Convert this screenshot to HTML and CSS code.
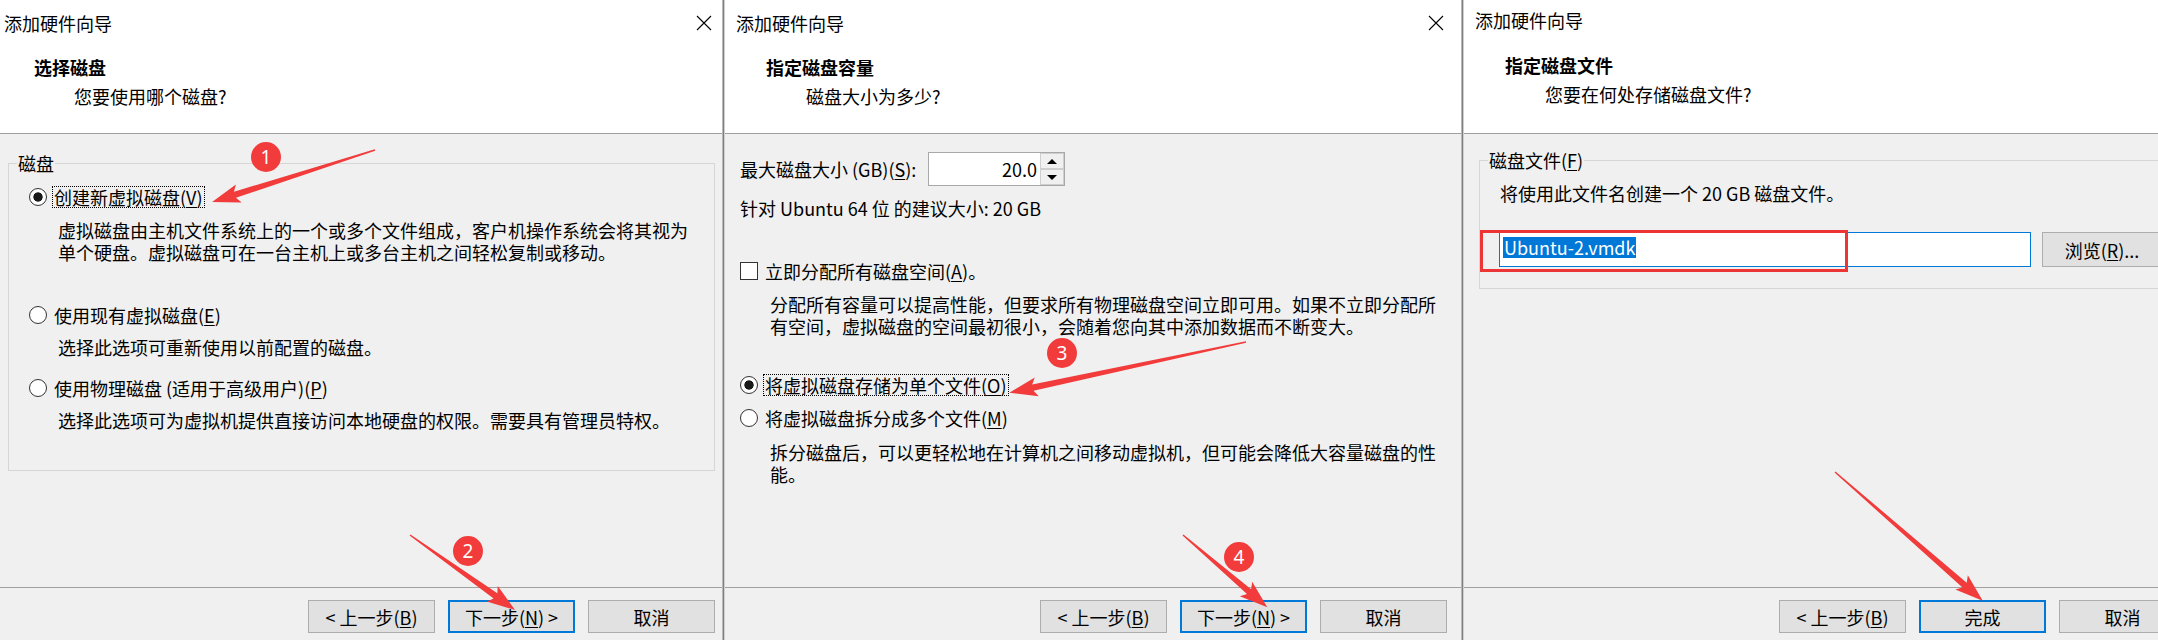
FILE: index.html
```html
<!DOCTYPE html>
<html lang="zh-CN">
<head>
<meta charset="utf-8">
<title>添加硬件向导</title>
<link rel="stylesheet" href="styles.css">
</head>
<body>
<div class="shot">
  <div class="crop crop-1">
    <div class="win win-1">
      <div class="head">
        <div class="titlebar"><span>添加硬件向导</span><svg class="close" viewBox="0 0 16 16"><path d="M1 1L15 15M15 1L1 15" stroke="#000" stroke-width="1.1" fill="none"/></svg></div>
        <div class="heading">选择磁盘</div>
        <div class="sub">您要使用哪个磁盘?</div>
      </div>
      <div class="main main-disk">
        <fieldset class="group">
          <legend>磁盘</legend>
          <div class="opt opt-a"><span class="radio on"></span><span class="lbl focus">创建新虚拟磁盘(<u>V</u>)</span></div>
          <p class="desc desc-a">虚拟磁盘由主机文件系统上的一个或多个文件组成，客户机操作系统会将其视为<br>单个硬盘。虚拟磁盘可在一台主机上或多台主机之间轻松复制或移动。</p>
          <div class="opt opt-b"><span class="radio"></span><span class="lbl">使用现有虚拟磁盘(<u>E</u>)</span></div>
          <p class="desc desc-b">选择此选项可重新使用以前配置的磁盘。</p>
          <div class="opt opt-c"><span class="radio"></span><span class="lbl">使用物理磁盘 (适用于高级用户)(<u>P</u>)</span></div>
          <p class="desc desc-b">选择此选项可为虚拟机提供直接访问本地硬盘的权限。需要具有管理员特权。</p>
        </fieldset>
      </div>
      <div class="foot">
        <button class="btn">&lt; 上一步(<u>B</u>)</button>
        <button class="btn default">下一步(<u>N</u>) &gt;</button>
        <button class="btn">取消</button>
      </div>
    </div>
  </div>
  <div class="sep"></div>
  <div class="crop crop-2">
    <div class="win">
      <div class="head">
        <div class="titlebar"><span>添加硬件向导</span><svg class="close" viewBox="0 0 16 16"><path d="M1 1L15 15M15 1L1 15" stroke="#000" stroke-width="1.1" fill="none"/></svg></div>
        <div class="heading">指定磁盘容量</div>
        <div class="sub">磁盘大小为多少?</div>
      </div>
      <div class="main main-size">
        <div class="size-row">
          <span class="size-label">最大磁盘大小 (GB)(<u>S</u>):</span>
          <div class="spin">
            <span class="spin-val">20.0</span>
            <span class="spin-btns"><span class="spin-up"></span><span class="spin-down"></span></span>
          </div>
        </div>
        <p class="note">针对 Ubuntu 64 位 的建议大小: 20 GB</p>
        <div class="opt opt-check"><span class="check"></span><span class="lbl">立即分配所有磁盘空间(<u>A</u>)。</span></div>
        <p class="desc desc-c">分配所有容量可以提高性能，但要求所有物理磁盘空间立即可用。如果不立即分配所<br>有空间，虚拟磁盘的空间最初很小，会随着您向其中添加数据而不断变大。</p>
        <div class="opt opt-d"><span class="radio on"></span><span class="lbl focus">将虚拟磁盘存储为单个文件(<u>O</u>)</span></div>
        <div class="opt opt-e"><span class="radio"></span><span class="lbl">将虚拟磁盘拆分成多个文件(<u>M</u>)</span></div>
        <p class="desc desc-d">拆分磁盘后，可以更轻松地在计算机之间移动虚拟机，但可能会降低大容量磁盘的性<br>能。</p>
      </div>
      <div class="foot">
        <button class="btn">&lt; 上一步(<u>B</u>)</button>
        <button class="btn default">下一步(<u>N</u>) &gt;</button>
        <button class="btn">取消</button>
      </div>
    </div>
  </div>
  <div class="sep"></div>
  <div class="crop crop-3">
    <div class="win">
      <div class="head head-3">
        <div class="titlebar"><span>添加硬件向导</span><svg class="close" viewBox="0 0 16 16"><path d="M1 1L15 15M15 1L1 15" stroke="#000" stroke-width="1.1" fill="none"/></svg></div>
        <div class="heading">指定磁盘文件</div>
        <div class="sub">您要在何处存储磁盘文件?</div>
      </div>
      <div class="main main-file">
        <fieldset class="group group-file">
          <legend>磁盘文件(<u>F</u>)</legend>
          <p class="hint">将使用此文件名创建一个 20 GB 磁盘文件。</p>
          <div class="file-row">
            <div class="file-input"><span class="sel">Ubuntu-2.vmdk</span></div>
            <button class="btn browse">浏览(<u>R</u>)...</button>
          </div>
        </fieldset>
      </div>
      <div class="foot">
        <button class="btn">&lt; 上一步(<u>B</u>)</button>
        <button class="btn default">完成</button>
        <button class="btn">取消</button>
      </div>
    </div>
  </div>
</div>

<svg class="marks" width="2158" height="640" viewBox="0 0 2158 640">
  <g fill="#f23b3b">
    <g transform="translate(375 150) rotate(162.3)"><polygon points="0,-0.7 147,-3.2 143,-9.5 171,0 143,9.5 147,3.2 0,0.7"/></g>
    <g transform="translate(410 535) rotate(35.5)"><polygon points="0,-0.7 105,-3.2 101,-9.5 129,0 101,9.5 105,3.2 0,0.7"/></g>
    <g transform="translate(1246 342) rotate(167.9)"><polygon points="0,-0.7 218,-3.2 214,-9.5 242,0 214,9.5 218,3.2 0,0.7"/></g>
    <g transform="translate(1183 535) rotate(40.6)"><polygon points="0,-0.7 87,-3.2 83,-9.5 111,0 83,9.5 87,3.2 0,0.7"/></g>
    <g transform="translate(1835 472) rotate(41.1)"><polygon points="0,-0.7 172,-3.2 168,-9.5 196,0 168,9.5 172,3.2 0,0.7"/></g>
    <circle cx="266" cy="157" r="15"/>
    <circle cx="468" cy="551" r="15"/>
    <circle cx="1062" cy="353" r="15"/>
    <circle cx="1239" cy="557" r="15"/>
  </g>
  <g fill="#fff" font-family="Noto Sans, sans-serif" font-size="19" text-anchor="middle">
    <text x="266" y="164">1</text>
    <text x="468" y="558">2</text>
    <text x="1062" y="360">3</text>
    <text x="1239" y="564">4</text>
  </g>
  <rect x="1481.5" y="231.5" width="365" height="39" fill="none" stroke="#ee3535" stroke-width="3"/>
</svg>
</body>
</html>
```

FILE: styles.css
```css
* {
  box-sizing: border-box;
}

body {
  margin: 0;
  width: 2158px;
  height: 640px;
  overflow: hidden;
  position: relative;
  background: #f0f0f0;
  color: #000;
  font-family: "Noto Sans CJK SC", "Noto Sans", sans-serif;
  font-size: 18px;
  line-height: 22px;
}

p {
  margin: 0;
}

u {
  text-decoration-thickness: 1px;
  text-underline-offset: 2px;
}

.shot {
  display: flex;
  height: 640px;
}

.crop {
  height: 640px;
  overflow: hidden;
  flex-shrink: 0;
}

.crop-1 { width: 722px; }
.crop-2 { width: 736px; }
.crop-3 { width: 694px; }

.sep {
  width: 3px;
  flex-shrink: 0;
  background: linear-gradient(to right, #b8b8b8 0, #b8b8b8 1px, #7f7f7f 1px, #7f7f7f 2px, #cfcfcf 2px);
}

.win {
  width: 736px;
  height: 640px;
  display: flex;
  flex-direction: column;
  background: #f0f0f0;
}

.win-1 {
  margin-left: -7px;
}

.head {
  height: 134px;
  flex-shrink: 0;
  background: #fff;
  border-bottom: 1px solid #a0a0a0;
  padding-top: 12px;
  white-space: nowrap;
}

.head-3 {
  padding-top: 9px;
}

.titlebar {
  height: 22px;
  display: flex;
  align-items: center;
  justify-content: space-between;
  padding: 0 17px 0 11px;
}

.close {
  width: 16px;
  height: 16px;
}

.heading {
  margin-top: 22px;
  padding-left: 41px;
  font-weight: 700;
}

.head-3 .heading {
  margin-top: 23px;
}

.sub {
  margin-top: 7px;
  padding-left: 81px;
}

.main {
  flex: 1;
  padding-left: 15px;
  white-space: nowrap;
}

.main-disk { padding-top: 18px; }
.main-size { padding-top: 18px; }
.main-file { padding-top: 15px; }

.group {
  margin: 0;
  padding: 0 0 39px 20px;
  width: 707px;
  border: 1px solid #d6d6d6;
}

.group legend {
  margin-left: -12px;
  padding: 0 1px;
  line-height: 22px;
}

.group-file {
  padding: 0 0 21px 0;
}

.group-file legend {
  margin-left: 8px;
}

.opt {
  display: flex;
  align-items: center;
  gap: 5px;
  height: 22px;
}

.opt-a { margin-top: 12px; }
.opt-b { margin-top: 41px; }
.opt-c { margin-top: 19px; }
.opt-check { margin-top: 41px; }
.opt-d { margin-top: 37px; }
.opt-e { margin-top: 11px; }

.radio {
  width: 18px;
  height: 18px;
  border-radius: 50%;
  border: 1px solid #333;
  background: #fff;
  flex-shrink: 0;
}

.radio.on {
  background: radial-gradient(circle, #1a1a1a 0, #1a1a1a 4.3px, #fff 5px);
}

.check {
  width: 18px;
  height: 18px;
  border: 1px solid #333;
  background: #fff;
  flex-shrink: 0;
}

.lbl {
  height: 22px;
  line-height: 20px;
  padding: 0 1px;
  border: 1px dotted transparent;
}

.lbl.focus {
  border-color: #000;
}

.desc {
  margin-left: 29px;
}

.desc-a { margin-top: 11px; }
.desc-b { margin-top: 10px; }
.desc-c { margin-top: 11px; margin-left: 30px; }
.desc-d { margin-top: 12px; margin-left: 30px; }

.size-row {
  display: flex;
  align-items: center;
  height: 34px;
}

.size-label {
  width: 188px;
}

.spin {
  width: 137px;
  height: 34px;
  display: flex;
  border: 1px solid #a8a8a8;
  background: #fff;
}

.spin-val {
  flex: 1;
  text-align: right;
  padding-right: 3px;
  line-height: 32px;
}

.spin-btns {
  width: 24px;
  display: flex;
  flex-direction: column;
}

.spin-up,
.spin-down {
  flex: 1;
  background: #f0f0f0;
  border: 1px solid #cfcfcf;
  display: flex;
  align-items: center;
  justify-content: center;
}

.spin-up::after {
  content: "";
  border-left: 5px solid transparent;
  border-right: 5px solid transparent;
  border-bottom: 5px solid #000;
}

.spin-down::after {
  content: "";
  border-left: 5px solid transparent;
  border-right: 5px solid transparent;
  border-top: 5px solid #000;
}

.note {
  margin-top: 11px;
}

.hint {
  margin-top: 11px;
  padding-left: 20px;
}

.file-row {
  margin-top: 28px;
  padding-left: 19px;
  display: flex;
  gap: 11px;
  height: 35px;
}

.file-input {
  width: 532px;
  height: 35px;
  border: 1px solid #0078d7;
  background: #fff;
  padding: 3px 0 0 3px;
}

.sel {
  display: inline-block;
  height: 21px;
  line-height: 21px;
  background: #0078d7;
  color: #fff;
  padding: 0 1px;
}

.foot {
  height: 53px;
  flex-shrink: 0;
  border-top: 1px solid #a0a0a0;
  display: flex;
  justify-content: flex-end;
  gap: 13px;
  padding: 12px 14px 0 0;
}

.btn {
  width: 127px;
  height: 33px;
  padding: 0;
  border: 1px solid #adadad;
  background: #e1e1e1;
  color: #000;
  font: inherit;
  line-height: 20px;
  white-space: nowrap;
}

.btn.default {
  border: 2px solid #0078d7;
}

.browse {
  width: 120px;
  height: 35px;
}

.marks {
  position: absolute;
  left: 0;
  top: 0;
  pointer-events: none;
}
```
